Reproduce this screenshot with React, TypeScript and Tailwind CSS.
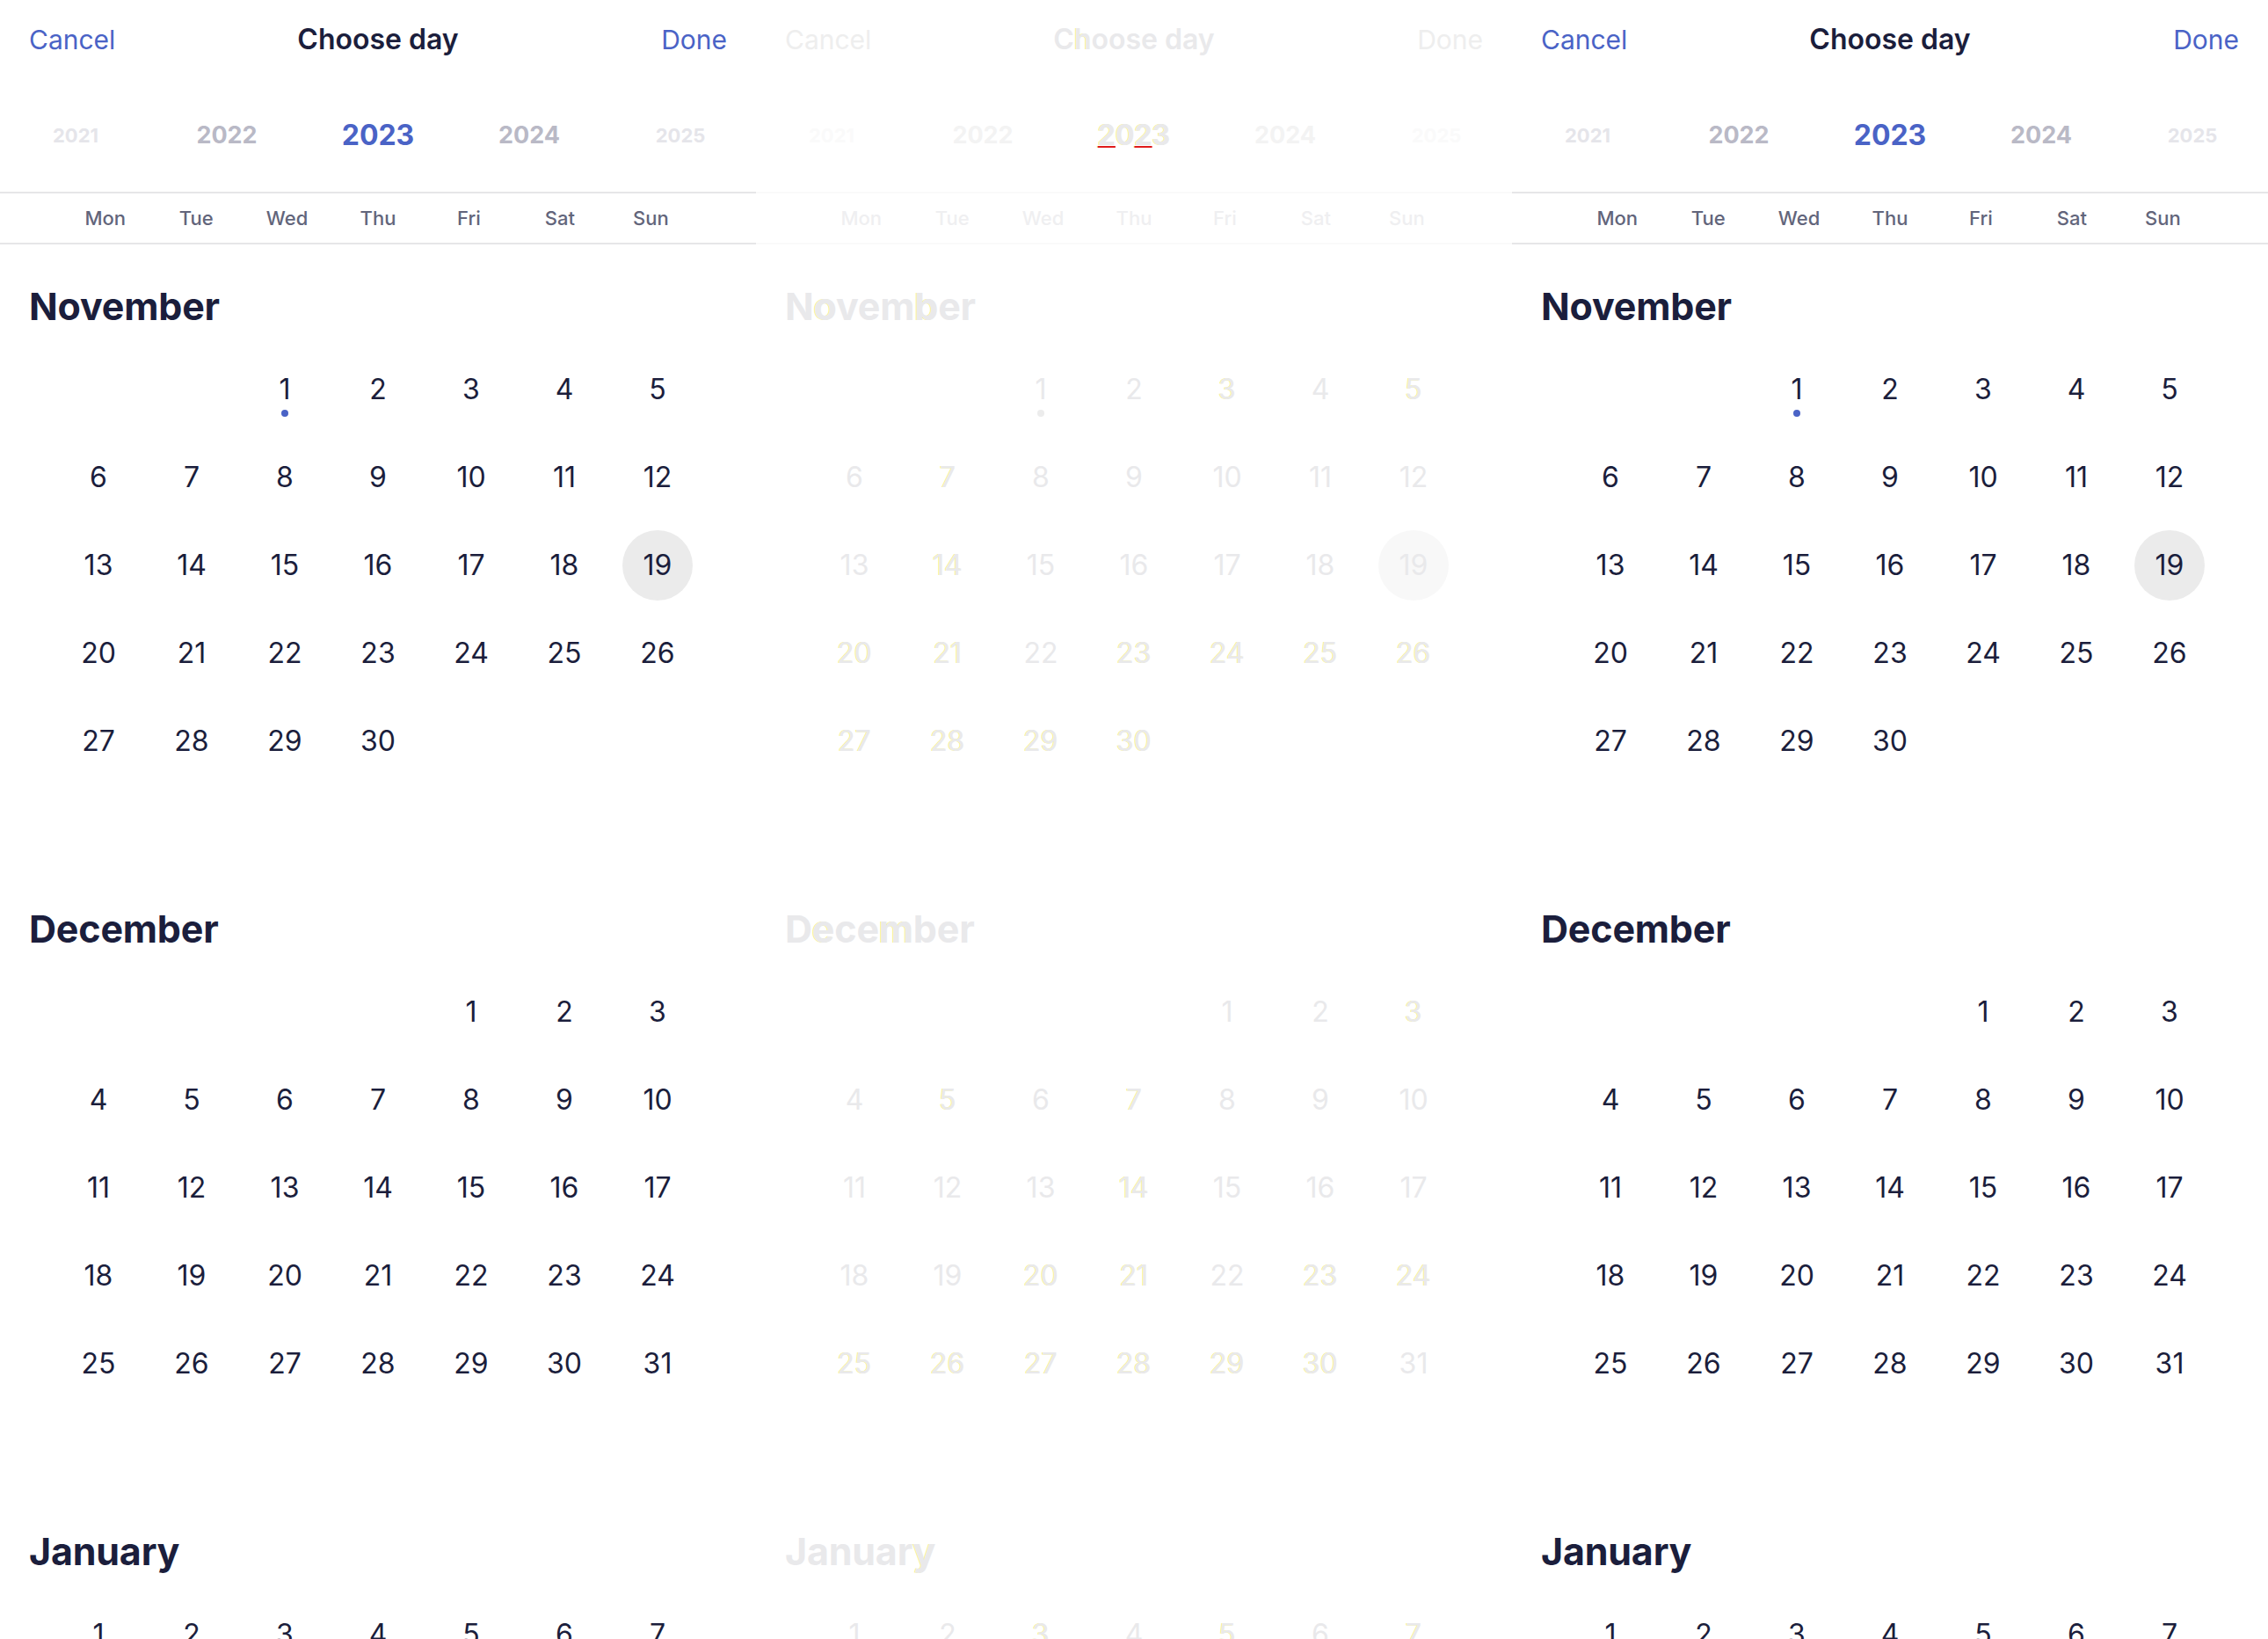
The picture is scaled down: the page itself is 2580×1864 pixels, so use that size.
import React from 'react';

const GLITCH = new Set([3, 5, 7, 14, 20, 21, 23, 24, 25, 26, 27, 28, 29, 30]);

type Month = { name: string; offset: number; days: number; glitchLetters: number[] };

const MONTHS: Month[] = [
  { name: 'November', offset: 2, days: 30, glitchLetters: [1, 5] },
  { name: 'December', offset: 4, days: 31, glitchLetters: [1, 4] },
  { name: 'January', offset: 0, days: 31, glitchLetters: [6] },
];

const WEEKDAYS = ['Mon', 'Tue', 'Wed', 'Thu', 'Fri', 'Sat', 'Sun'];

const GLOW = '[text-shadow:-1px_0_0_#f5f190]';

function Panel({ faded = false }: { faded?: boolean }) {
  const navy = faded ? 'text-[#e9e9eb]' : 'text-[#1b1e3c]';
  const blue = faded ? 'text-[#eeeeee]' : 'text-[#4a63c6]';
  const yearMid = faded ? 'text-[#f3f3f3]' : 'text-[#b9b9c6]';
  const yearFar = faded ? 'text-[#fafafa]' : 'text-[#e5e5ea]';
  const weekday = faded ? 'text-[#efeff1]' : 'text-[#62657b]';
  const line = faded ? 'border-[#fafafa]' : 'border-[#e6e6e8]';
  const circle = faded ? 'bg-[#f8f8f8]' : 'bg-[#ebebeb]';
  const dot = faded ? 'bg-[#ececec]' : 'bg-[#4a63c6]';
  const glow = faded ? GLOW : '';

  return (
    <div className="w-[860px] shrink-0">
      {/* Header */}
      <div className="grid h-[90px] grid-cols-3 items-center px-[33px]">
        <span className={`text-[30px] ${blue}`}>Cancel</span>
        <span className={`text-center text-[32px] font-semibold whitespace-nowrap ${navy}`}>
          C<span className={glow}>h</span>oose day
        </span>
        <span className={`text-right text-[30px] ${blue}`}>Done</span>
      </div>

      {/* Years */}
      <div className="grid h-[128px] grid-cols-5 items-center text-center font-bold">
        <span className={`text-[22px] ${yearFar}`}>2021</span>
        <span className={`text-[27px] ${yearMid}`}>2022</span>
        {faded ? (
          <span className={`text-[32px] ${navy}`}>
            <span className={`underline decoration-[#e01b1b] decoration-2 underline-offset-1 ${GLOW}`}>2</span>
            <span className={GLOW}>0</span>
            <span className={`underline decoration-[#e01b1b] decoration-2 underline-offset-1 ${GLOW}`}>2</span>
            <span className={GLOW}>3</span>
          </span>
        ) : (
          <span className={`text-[32px] ${blue}`}>2023</span>
        )}
        <span className={`text-[27px] ${yearMid}`}>2024</span>
        <span className={`text-[22px] ${yearFar}`}>2025</span>
      </div>

      {/* Weekdays */}
      <div className={`h-[60px] border-y-2 ${line}`}>
        <div className="mx-auto grid h-full w-[724px] grid-cols-7 items-center text-center">
          {WEEKDAYS.map((w) => (
            <span key={w} className={`text-[22px] font-medium ${weekday}`}>
              {w}
            </span>
          ))}
        </div>
      </div>

      {/* Months */}
      {MONTHS.map((m, mi) => (
        <div key={m.name} className="pb-[93px] pt-[42px]">
          <h2 className={`px-[33px] text-[43px] font-bold leading-[56px] tracking-[-0.2px] ${navy}`}>
            {m.name.split('').map((ch, i) => (
              <span key={i} className={m.glitchLetters.includes(i) ? glow : ''}>
                {ch}
              </span>
            ))}
          </h2>
          <div className="mx-auto mt-[17px] grid w-[742px] grid-cols-7">
            {Array.from({ length: m.offset }).map((_, i) => (
              <div key={`e${i}`} className="h-[100px]" />
            ))}
            {Array.from({ length: m.days }).map((_, i) => {
              const d = i + 1;
              const selected = mi === 0 && d === 19;
              const hasDot = mi === 0 && d === 1;
              const g = faded && GLITCH.has(d) ? GLOW : '';
              return (
                <div key={d} className="relative flex h-[100px] items-center justify-center">
                  {selected && <div className={`absolute h-20 w-20 rounded-full ${circle}`} />}
                  <span className={`relative text-[32px] leading-none ${navy} ${g}`}>{d}</span>
                  {hasDot && (
                    <div className={`absolute left-1/2 top-[73px] h-2 w-2 -translate-x-1/2 rounded-full ${dot}`} />
                  )}
                </div>
              );
            })}
          </div>
        </div>
      ))}
    </div>
  );
}

export default function App() {
  return (
    <div className="flex h-[1864px] w-[2580px] items-start overflow-hidden bg-white font-['Inter',sans-serif]">
      <Panel />
      <Panel faded />
      <Panel />
    </div>
  );
}
